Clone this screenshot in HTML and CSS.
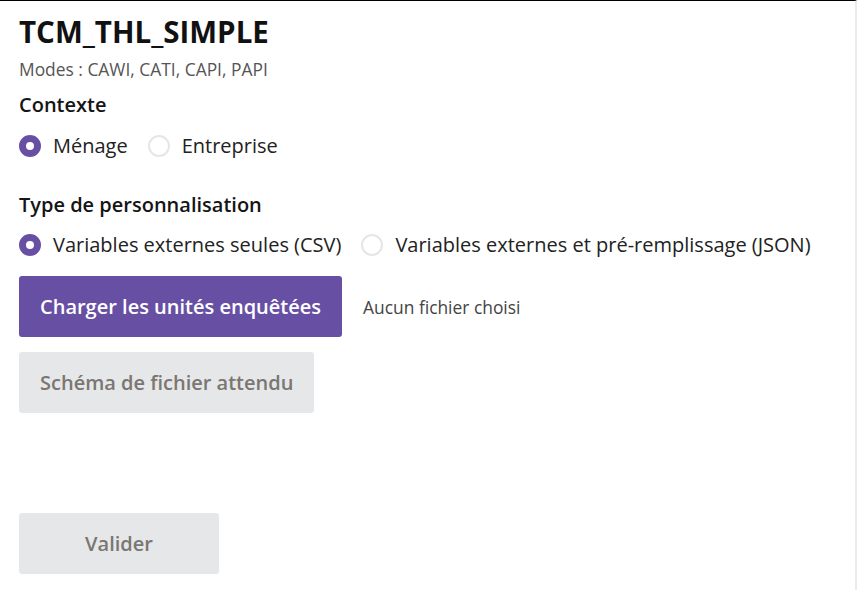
FILE: index.html
```html
<!DOCTYPE html>
<html lang="fr">
<head>
    <meta charset="UTF-8">
    <title>TCM_THL_SIMPLE</title>
    <link rel="stylesheet" href="styles.css">
</head>
<body>
    <div class="page">
        <h1 class="title">TCM_THL_SIMPLE</h1>
        <p class="modes">Modes : CAWI, CATI, CAPI, PAPI</p>

        <h2 class="section">Contexte</h2>
        <div class="radio-group">
            <label class="radio"><span class="dot checked"></span>Ménage</label>
            <label class="radio"><span class="dot"></span>Entreprise</label>
        </div>

        <h2 class="section perso">Type de personnalisation</h2>
        <div class="radio-group">
            <label class="radio"><span class="dot checked"></span>Variables externes seules (CSV)</label>
            <label class="radio"><span class="dot"></span>Variables externes et pré-remplissage (JSON)</label>
        </div>

        <div class="file-row">
            <button class="btn primary">Charger les unités enquêtées</button>
            <span class="file-name">Aucun fichier choisi</span>
        </div>
        <button class="btn disabled">Schéma de fichier attendu</button>

        <button class="btn disabled validate">Valider</button>
    </div>
</body>
</html>
```

FILE: styles.css
```css
body {
    margin: 0;
    font-family: "Open Sans", "Noto Sans", sans-serif;
    color: #1a1a1a;
    background: #fff;
}

.page {
    width: 836px;
    height: 589px;
    border-top: 1px solid #000;
    border-right: 2px solid #ebebeb;
    padding-left: 19px;
    display: flex;
    flex-direction: column;
    align-items: flex-start;
}

.title {
    margin: 13px 0 0;
    font-size: 29.5px;
    font-weight: 700;
    line-height: 36px;
    color: #111;
}

.modes {
    margin: 8px 0 0;
    font-size: 17.4px;
    line-height: 22px;
    color: #555;
}

.section {
    margin: 12px 0 0;
    font-size: 20px;
    font-weight: 600;
    line-height: 26px;
    color: #151515;
}

.section.perso {
    margin-top: 33px;
}

.radio-group {
    display: flex;
    gap: 20px;
    margin-top: 15px;
}

.perso + .radio-group {
    margin-top: 14px;
}

.radio {
    display: flex;
    align-items: center;
    gap: 12px;
    font-size: 20px;
    line-height: 26px;
    color: #222;
}

.dot {
    width: 22px;
    height: 22px;
    box-sizing: border-box;
    border-radius: 50%;
    border: 2px solid #e6e6e6;
    background: #fff;
}

.dot.checked {
    border: 7px solid #6750a4;
}

.file-row {
    display: flex;
    align-items: center;
    gap: 21px;
    margin-top: 18px;
}

.btn {
    font-family: "Open Sans", "Noto Sans", sans-serif;
    font-size: 20px;
    font-weight: 600;
    height: 61px;
    padding: 0 21px;
    border: none;
    border-radius: 3px;
    cursor: pointer;
}

.primary {
    background: #6750a4;
    color: #fff;
}

.disabled {
    background: #e6e7e9;
    color: #7a7671;
    margin-top: 15px;
}

.file-name {
    font-size: 17.4px;
    color: #444;
}

.validate {
    width: 200px;
    margin-top: 100px;
}
```
